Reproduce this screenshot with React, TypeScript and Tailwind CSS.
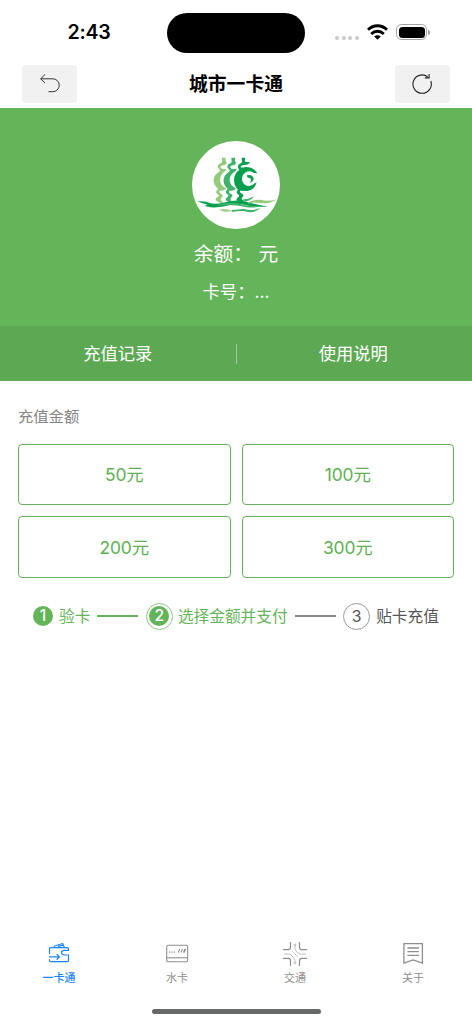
const amounts = ['50元', '100元', '200元', '300元'];

const tabs = [
  { name: '一卡通', icon: WalletIcon, active: true },
  { name: '水卡', icon: CardIcon, active: false },
  { name: '交通', icon: TrafficIcon, active: false },
  { name: '关于', icon: AboutIcon, active: false },
];

function WalletIcon() {
  return (
    <svg viewBox="0 0 24 24" className="h-6 w-6" fill="none" stroke="currentColor" strokeWidth="1.2" strokeLinejoin="round" strokeLinecap="round">
      <path d="M2.5 11.3V6.8Q2.5 5.6 3.7 5.6H20.3Q21.5 5.6 21.5 6.8V8.4H17Q14.3 8.8 14.5 11Q14.8 13 17.5 13H21.5V18.4Q21.5 19.6 20.3 19.6H3.8Q2.5 19.6 2.5 18.4V17.6" />
      <path d="M2.5 14.9H12.3M10 12.5L12.5 14.9L10 17.3" />
      <path d="M7 4.2L15.6 1.5L17 4.6M11.4 4.4L16.3 3.2" />
    </svg>
  );
}

function CardIcon() {
  return (
    <svg viewBox="0 0 24 24" className="h-6 w-6" fill="none" stroke="currentColor" strokeWidth="1.1">
      <rect x="1.7" y="3.2" width="21" height="16.6" rx="1.8" />
      <path d="M1.7 15.8H22.7" />
      <path d="M4.2 10.1H5.4M6.5 10.1H7.7M8.8 10.1H10" />
      <path d="M13.3 10.5L14.7 6.9M16 10.5L17.4 6.9M18.5 10.5L19.8 6.9M19.3 10.5L20.6 6.9" />
    </svg>
  );
}

function TrafficIcon() {
  return (
    <svg viewBox="0 0 24 24" className="h-6 w-6" fill="none" stroke="currentColor" strokeWidth="1">
      <path strokeWidth="1.2" d="M7.5 0V5.2Q7.5 7.7 5 7.7H0M16.5 0V5.2Q16.5 7.7 19 7.7H24M0 16.3H5Q7.5 16.3 7.5 18.8V24M24 16.3H19Q16.5 16.3 16.5 18.8V24" />
      <g strokeWidth="0.8" opacity="0.7">
        <circle cx="12" cy="3" r="1" />
        <path d="M12 4V6.5Q12 8 13.2 9L15.2 11Q16.2 12 18 12H23" />
        <path d="M1 12H5Q7 12 8 13L10.8 15.7Q12 17 12 18.5V20" />
        <circle cx="12" cy="21" r="1" />
        <path d="M9 9.2L15 15.2" strokeDasharray="2 1" />
      </g>
    </svg>
  );
}

function AboutIcon() {
  return (
    <svg viewBox="0 0 24 24" className="h-6 w-6" fill="none" stroke="currentColor" strokeWidth="1.3">
      <path d="M2.9 1.6H21.4V21.2L12.1 17.9L2.9 21.2Z" />
      <path d="M6.4 6H18M6.4 9.7H18M6.4 13.4H18" />
    </svg>
  );
}

function Logo() {
  return (
    <svg viewBox="36 31 264 264" className="h-[88px] w-[88px] rounded-full bg-white">
      <path fill="#94cc7c" d="M126 81H137V91Q141 93 139 99Q136 104 129 104Q121 105 122 111Q125 117 140 114Q137 121 129 126Q120 135 120 148Q121 162 131 168L139 174Q132 182 119 180Q116 187 124 190Q132 192 126 199Q120 204 123 209L131 216H119L107 209Q105 203 114 198Q120 194 112 190Q105 185 111 179Q117 175 109 169Q99 159 101 146Q103 133 115 125Q124 119 117 115Q110 109 115 102Q123 97 126 95Z" />
      <path fill="#3fb26b" d="M154 81H165V91Q169 93 167 99Q165 104 158 104Q150 105 151 111Q154 117 171 114Q168 121 160 126Q149 135 149 148Q150 162 160 168L168 174Q161 182 148 180Q145 187 153 190Q161 192 155 199Q149 204 152 209L161 216H149L137 209Q135 203 143 198Q149 194 141 190Q134 185 140 179Q146 175 138 169Q129 159 131 146Q133 133 145 125Q153 119 146 115Q139 109 144 102Q152 97 155 95Z" />
      <path fill="#08a04f" d="M185 81H195V93L210 95Q208 102 193 103Q182 104 182 109Q184 112 196 109Q222 109 232 128L222 127Q211 118 198 124Q185 132 186 148Q189 163 204 166Q218 166 230 153Q226 176 202 181L180 180Q178 186 186 189Q193 193 188 199Q182 204 188 208L196 216H182L169 209Q168 203 176 198Q180 194 173 190Q167 184 174 177Q162 165 162 147Q163 128 178 117Q170 109 177 101Q186 96 186 94Z" />
      <path fill="#08a04f" d="M200 134Q216 129 221 143Q221 153 210 156Q217 144 208 141Q203 144 200 134Z" />
      <path fill="#08a04f" d="M52 211Q76 212 87 216Q103 222 126 217Q166 206 190 211Q214 218 264 228Q229 230 204 225Q177 216 148 224Q120 232 91 230L72 226L83 222Q66 219 52 211Z" />
      <path fill="#3fb26b" d="M112 222Q160 211 188 222Q209 229 249 224Q224 234 196 229Q157 219 112 225ZM190 206Q207 206 222 197Q211 213 190 213ZM155 238Q176 236 192 234Q213 244 243 231Q218 252 193 241Q175 240 155 244Z" />
      <path fill="#94cc7c" d="M205 215Q225 205 244 208Q264 213 289 207Q266 221 240 217Q222 213 205 219ZM116 237Q136 233 155 240Q136 247 116 237Z" />
    </svg>
  );
}

function StatusBar() {
  return (
    <div className="grid h-[65px] shrink-0 grid-cols-[167px_138px_1fr] items-start pt-[13px]">
      <div className="flex h-10 items-center justify-center pl-[11px] text-[19.6px] font-semibold tracking-[-0.2px]">2:43</div>
      <div className="h-10 rounded-full bg-black" />
      <div className="flex h-[38px] items-center pl-[30px]">
        <div className="flex gap-[2.5px] pt-[11px]">
          <i className="h-1 w-1 rounded-full bg-[#cbcbcb]" />
          <i className="h-1 w-1 rounded-full bg-[#cbcbcb]" />
          <i className="h-1 w-1 rounded-full bg-[#cbcbcb]" />
          <i className="h-1 w-1 rounded-full bg-[#cbcbcb]" />
        </div>
        <svg viewBox="0 0 21 16" className="ml-[8.5px] h-4 w-[21px]" fill="none" stroke="#000" strokeWidth="2.9">
          <path d="M1 5.8Q5.2 1.8 10.5 1.8T20 5.8M4.2 10Q7 7.2 10.5 7.2T16.8 10" />
          <path d="M7.2 12.6Q10.5 10 13.8 12.6L10.5 15.8Z" fill="#000" stroke="none" />
        </svg>
        <div className="ml-2 h-4 w-[31px] rounded-[5.5px] border border-[#a3a3a3] p-[1.5px]">
          <div className="h-full rounded-[3.5px] bg-black" />
        </div>
        <div className="ml-px h-[5px] w-[2px] rounded-r-full bg-[#a3a3a3]" />
      </div>
    </div>
  );
}

export default function App() {
  return (
    <div className="flex h-[1024px] w-[472px] flex-col overflow-hidden bg-white font-['Inter','Noto_Sans_CJK_SC',sans-serif] text-black">
      <StatusBar />

      <header className="flex h-[42.5px] shrink-0 items-start justify-between px-[22px]">
        <button className="flex h-[38px] w-[55px] items-center justify-center rounded bg-[#f1f1f1]">
          <svg viewBox="0 0 20 20" className="h-5 w-5" fill="none" stroke="#333" strokeWidth="1">
            <path d="M5 0.5L0.7 4.8L5 9.1M0.7 4.8H12.8A6.4 6.4 0 0 1 12.8 17.7H8.5" />
          </svg>
        </button>
        <h1 className="text-[18.8px] leading-[40px] font-bold">城市一卡通</h1>
        <button className="flex h-[38px] w-[55px] items-center justify-center rounded bg-[#f1f1f1]">
          <svg viewBox="0 0 21 21" className="h-[21px] w-[21px]" fill="none" stroke="#222" strokeWidth="1.1">
            <path d="M18.8 7A9.2 9.2 0 1 1 15.6 2.7M17.1 0V3.9H12.9" />
          </svg>
        </button>
      </header>

      <section className="flex h-[218.5px] shrink-0 flex-col items-center bg-[#64b45a] pt-[33px] text-white">
        <Logo />
        <p className="mt-[9.5px] text-[19.7px] leading-8 font-[380] whitespace-pre">余额： 元</p>
        <p className="mt-[8px] text-[17.4px] leading-7 font-[380]">卡号：...</p>
      </section>

      <nav className="flex h-[55px] shrink-0 items-center bg-[#5da953] text-[17.3px] font-[380] text-white">
        <a className="flex-1 pt-px pl-px text-center">充值记录</a>
        <span className="ml-px h-5 w-px bg-[#9dcc97]" />
        <a className="flex-1 pt-px pr-[2px] text-center">使用说明</a>
      </nav>

      <main className="flex-1 px-[18px] pt-6">
        <h2 className="text-[15.3px] leading-6 font-[380] text-[#858585]">充值金额</h2>
        <div className="mt-[14.5px] grid grid-cols-2 gap-[11px]">
          {amounts.map((amount) => (
            <button key={amount} className="h-[61.5px] rounded-[4px] border border-[#64b45a] pt-[2px] text-[17.4px] font-[380] tracking-[-0.1px] text-[#5cb052]">
              {amount}
            </button>
          ))}
        </div>

        <div className="mt-[25px] flex h-[27px] items-center pl-[15px] text-[15.7px] text-[#64b45a]">
          <span className="flex h-5 w-5 items-center justify-center rounded-full bg-[#64b45a] font-medium text-white">1</span>
          <span className="ml-[6px] pt-[2px]">验卡</span>
          <span className="ml-[7px] h-[1.5px] w-[41px] bg-[#64b45a]" />
          <span className="ml-[7.5px] flex h-[27px] w-[27px] items-center justify-center rounded-full border border-[#8cc785]">
            <span className="flex h-5 w-5 items-center justify-center rounded-full bg-[#64b45a] font-medium text-white">2</span>
          </span>
          <span className="ml-[5px] pt-[2px]">选择金额并支付</span>
          <span className="ml-[7.5px] h-[1.5px] w-[41px] bg-[#888]" />
          <span className="ml-[7px] flex h-[27px] w-[27px] items-center justify-center rounded-full border border-[#999] pt-px text-[#555]">3</span>
          <span className="ml-[6px] pt-[2px] text-[#555]">贴卡充值</span>
        </div>
      </main>

      <footer className="h-[84px] shrink-0">
        <div className="grid grid-cols-4 pt-[2px]">
          {tabs.map((tab) => (
            <a key={tab.name} className={`flex flex-col items-center ${tab.active ? 'font-medium text-[#1a84fc]' : 'text-[#8e8e8e]'}`}>
              <tab.icon />
              <span className="mt-1 text-[11px] leading-4">{tab.name}</span>
            </a>
          ))}
        </div>
        <div className="mx-auto mt-[22.5px] h-[5.5px] w-[169px] rounded-full bg-[#666967]" />
      </footer>
    </div>
  );
}
